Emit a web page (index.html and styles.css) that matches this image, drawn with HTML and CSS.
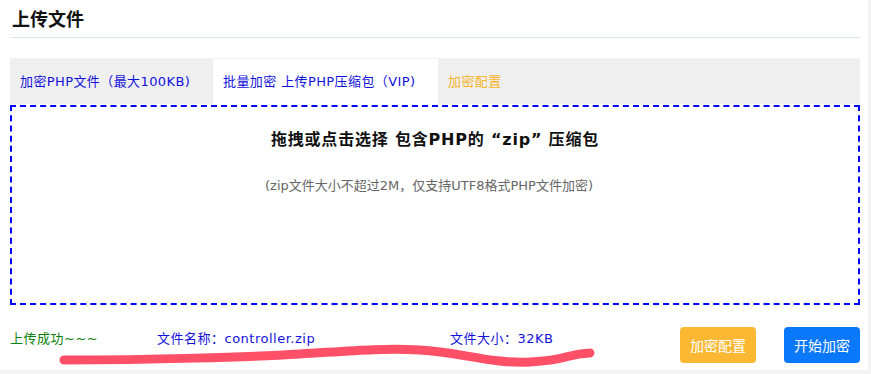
FILE: index.html
```html
<!DOCTYPE html>
<html lang="zh-CN">
<head>
  <meta charset="UTF-8">
  <title>上传文件</title>
  <link rel="stylesheet" href="styles.css">
</head>
<body>

<div class="panel">
  <h2 class="panel-title">上传文件</h2>

  <!-- tabs -->
  <div class="tabs">
    <div class="tab">加密PHP文件（最大100KB)</div>
    <div class="tab active">批量加密 上传PHP压缩包（VIP)</div>
    <div class="tab config">加密配置</div>
  </div>

  <!-- drop zone -->
  <div class="dropzone">
    <div class="drop-title">拖拽或点击选择 包含PHP的 “zip” 压缩包</div>
    <div class="drop-tip">(zip文件大小不超过2M，仅支持UTF8格式PHP文件加密)</div>
  </div>

  <div class="footer">
    <span class="status">上传成功~~~</span>
    <span class="file-name">文件名称：controller.zip</span>
    <span class="file-size">文件大小：32KB</span>
    <button class="btn btn-config">加密配置</button>
    <button class="btn btn-start">开始加密</button>
  </div>

  <!-- marker annotation -->
  <svg class="scribble" width="871" height="374" viewBox="0 0 871 374">
    <path d="M64 360 C 150 360, 250 357, 300 354 S 380 348, 420 350 S 490 364, 530 362 S 565 354, 590 353" fill="none" stroke="#ff5068" stroke-width="9" stroke-linecap="round"/>
  </svg>
</div>

</body>
</html>
```

FILE: styles.css
```css
body {
  margin: 0;
  padding: 0;
  background-color: #f4f4f4;
  font-family: "DejaVu Sans", "Noto Sans CJK SC", sans-serif;
}
.panel {
  position: relative;
  width: 850px;
  height: 370px;
  padding: 0 8px 0 10px;
  background-color: #fff;
}
.panel-title {
  margin: 0;
  padding: 9px 2px 0;
  height: 28px;
  line-height: 22px;
  font-size: 18px;
  font-weight: bold;
  color: #111;
  border-bottom: 1px solid #dde3e8;
}
.tabs {
  display: flex;
  margin-top: 20px;
  height: 45px;
  background-color: #efefef;
  border-top: 1px solid #f2f2f2;
}
.tab {
  padding: 0 10px;
  line-height: 45px;
  font-size: 13px;
  letter-spacing: 0.4px;
  color: #1111dd;
}
.tab:first-child {
  width: 183px;
}
.tab.active {
  width: 205px;
  background-color: #fff;
}
.tab.config {
  color: #f7b427;
}
.dropzone {
  margin-top: 1px;
  height: 196px;
  border: 2px dashed #0000ff;
  text-align: center;
}
.drop-title {
  padding-top: 21px;
  line-height: 24px;
  font-size: 16px;
  font-weight: bold;
  color: #111;
  letter-spacing: 0.8px;
}
.drop-tip {
  margin-top: 24px;
  padding-right: 12px;
  line-height: 20px;
  font-size: 13px;
  color: #666;
}
.footer {
  display: flex;
  align-items: flex-start;
  margin-top: 22px;
}
.footer span {
  line-height: 20px;
  margin-top: 2px;
  font-size: 13px;
  letter-spacing: 0.5px;
}
.status {
  width: 147px;
  color: #0b800b;
}
.file-name {
  width: 293px;
  color: #1111dd;
}
.file-size {
  flex: 1;
  color: #1111dd;
}
.btn {
  width: 76px;
  height: 36px;
  border: none;
  border-radius: 4px;
  color: #fff;
  font-size: 14px;
  font-family: "DejaVu Sans", "Noto Sans CJK SC", sans-serif;
}
.btn-config {
  background-color: #fcb833;
  margin-right: 28px;
}
.btn-start {
  background-color: #0a78fb;
}
.scribble {
  position: absolute;
  left: 0;
  top: 0;
  pointer-events: none;
}
```
